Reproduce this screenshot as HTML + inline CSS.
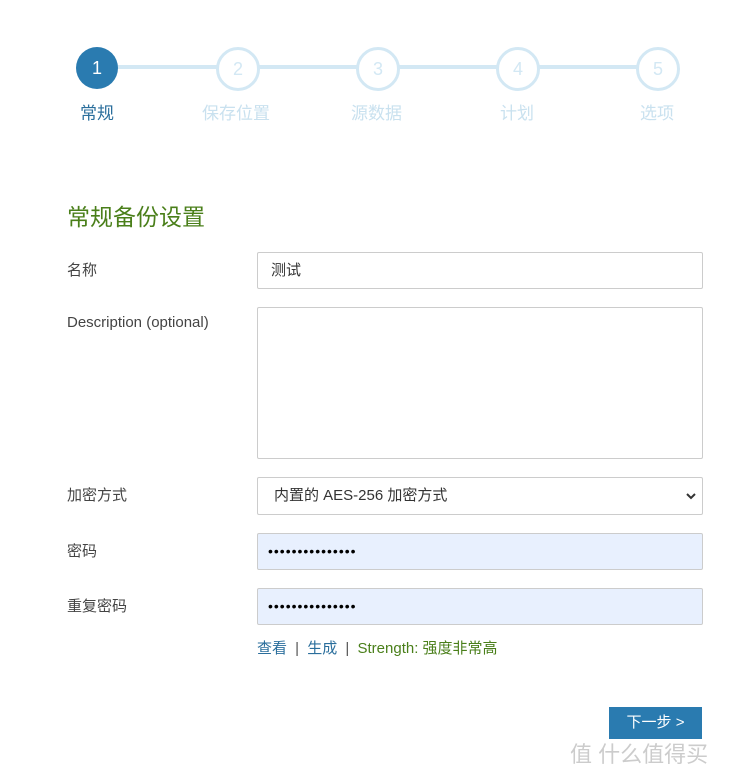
<!DOCTYPE html>
<html><head><meta charset="utf-8"><style>
body{margin:0;width:736px;height:777px;background:#fff;font-family:"Liberation Sans","Noto Sans CJK SC",sans-serif;position:relative;overflow:hidden}
.a{position:absolute}
.c{position:absolute;width:38px;height:38px;border-radius:50%;border:3px solid #d3e8f4;background:#fff;color:#d3e8f4;font-size:18px;text-align:center;line-height:38px;box-sizing:content-box;top:47px}
.line{position:absolute;top:65px;height:4px;background:#d3e8f4;left:100px;width:560px}
.sl{position:absolute;top:99px;font-size:17px;color:#c9e1ef}
.lab{position:absolute;left:67px;font-size:15px;color:#444}
.in{position:absolute;left:257px;width:446px;border:1px solid #ccc;border-radius:2px;box-sizing:border-box;background:#fff}
.pw{background:#e8f0fe;height:37px;font-size:14px;letter-spacing:1px;padding-left:10px;line-height:35px;color:#000}
</style></head><body>
<div class="line"></div>
<div class="c" style="left:76px;background:#2a7bb0;border-color:#2a7bb0;color:#fff;width:42px;height:42px;border:0;line-height:42px">1</div>
<div class="c" style="left:216px">2</div>
<div class="c" style="left:356px">3</div>
<div class="c" style="left:496px">4</div>
<div class="c" style="left:636px">5</div>
<div class="sl" style="left:80px;color:#2a6e9c">常规</div>
<div class="sl" style="left:202px">保存位置</div>
<div class="sl" style="left:351px">源数据</div>
<div class="sl" style="left:500px">计划</div>
<div class="sl" style="left:640px">选项</div>
<div class="a" style="left:67px;top:198px;font-size:23px;color:#4a7f1a">常规备份设置</div>
<div class="lab" style="top:259px">名称</div>
<div class="in" style="top:252px;height:37px;font-size:15px;padding-left:13px;line-height:35px;color:#333">测试</div>
<div class="lab" style="top:314px">Description (optional)</div>
<div class="in" style="top:307px;height:152px"></div>
<div class="lab" style="top:484px">加密方式</div>
<div class="in" style="top:477px;height:38px;font-size:15px;padding-left:16px;line-height:36px;color:#333">内置的 AES-256 加密方式<svg style="position:absolute;right:6px;top:14px" width="10" height="8" viewBox="0 0 10 8"><path d="M1 2 L5 6 L9 2" stroke="#333" stroke-width="2" fill="none"/></svg></div>
<div class="lab" style="top:540px">密码</div>
<div class="in pw" style="top:533px">•••••••••••••••</div>
<div class="lab" style="top:595px">重复密码</div>
<div class="in pw" style="top:588px">•••••••••••••••</div>
<div class="a" style="left:257px;top:637px;font-size:15px;color:#2a6e9c">查看 <span style="color:#555;margin:0 4px">|</span> 生成 <span style="color:#555;margin:0 4px">|</span> <span style="color:#4a7f1a">Strength: 强度非常高</span></div>
<div class="a" style="left:609px;top:707px;width:93px;height:32px;background:#2a7bb0;color:#fff;font-size:15px;text-align:center;line-height:32px">下一步 &gt;</div>
<div class="a" style="left:570px;top:737px;font-size:22px;color:#ccc">值 什么值得买</div>
</body></html>
